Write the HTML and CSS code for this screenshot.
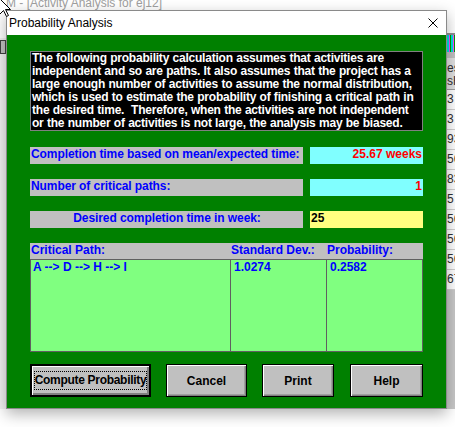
FILE: index.html
```html
<!DOCTYPE html>
<html>
<head>
<meta charset="utf-8">
<title>Probability Analysis</title>
<link rel="stylesheet" href="styles.css">
</head>
<body>
<div class="screen">
  <div class="apptitle">M - [Activity Analysis for ej12]</div>
  <div class="desk">
    <div class="leftstrip">
      <div class="lgap"></div>
      <div class="licon"></div>
    </div>
    <div class="dialog">
      <div class="titlebar">
        <span class="ttext">Probability Analysis</span>
        <svg class="close" width="10" height="10" viewBox="0 0 10 10"><path d="M0.5 0.5 L9.5 9.5 M9.5 0.5 L0.5 9.5" stroke="#000" stroke-width="1" fill="none"/></svg>
      </div>
      <div class="body">
        <div class="info">The following probability calculation assumes that activities are<br>independent and so are paths. It also assumes that the project has a<br>large enough number of activities to assume the normal distribution,<br>which is used to estimate the probability of finishing a critical path in<br>the desired time.&nbsp; Therefore, when the activities are not independent<br>or the number of activities is not large, the analysis may be biased.</div>
        <div class="row first">
          <div class="label">Completion time based on mean/expected time:</div>
          <div class="value cyan red">25.67 weeks</div>
        </div>
        <div class="row">
          <div class="label">Number of critical paths:</div>
          <div class="value cyan red">1</div>
        </div>
        <div class="row">
          <div class="label center">Desired completion time in week:</div>
          <div class="value yellow">25</div>
        </div>
        <div class="grid">
          <div class="ghead">
            <span class="h1">Critical Path:</span>
            <span class="h2">Standard Dev.:</span>
            <span class="h3">Probability:</span>
          </div>
          <div class="gbody">
            <div class="cell c1">A --&gt; D --&gt; H --&gt; I</div>
            <div class="cell c2">1.0274</div>
            <div class="cell c3">0.2582</div>
          </div>
        </div>
        <div class="buttons">
          <div class="btn default b1"><span class="focus">Compute Probability</span></div>
          <div class="btn b2">Cancel</div>
          <div class="btn b3">Print</div>
          <div class="btn b4">Help</div>
        </div>
      </div>
    </div>
    <div class="rightstrip">
      <div class="rs-white"></div>
      <div class="rs-line"></div>
      <div class="rs-tools"></div>
      <div class="rs-gray"></div>
      <div class="rs-head"><div>es</div><div>sH</div></div>
      <div class="rs-cells">
        <div class="rc">3</div>
        <div class="rc">3</div>
        <div class="rc">93</div>
        <div class="rc">56</div>
        <div class="rc">83</div>
        <div class="rc">5</div>
        <div class="rc">56</div>
        <div class="rc">56</div>
        <div class="rc">56</div>
        <div class="rc">67</div>
      </div>
      <div class="rs-bottom"></div>
    </div>
  </div>
  <svg class="cursor" width="13" height="20" viewBox="0 0 13 20"><path d="M0.5 0.5 L0.5 16.5 L4.5 12.5 L7.5 18.5 L9.5 17.5 L6.5 11.5 L11.5 11.5 Z" fill="#fff" stroke="#000" stroke-width="1"/></svg>
</div>
</body>
</html>
```

FILE: styles.css
```css
* { box-sizing: border-box; }
body {
  margin: 0;
  background: #fff;
  font-family: "Liberation Sans", Arial, sans-serif;
}
.screen {
  position: relative;
  width: 455px;
  height: 427px;
  overflow: hidden;
  background: #fff;
}
.apptitle {
  height: 10px;
  overflow: hidden;
  font-size: 12px;
  line-height: 6px;
  color: #a0a0a0;
  padding-left: 6px;
  white-space: nowrap;
}
.desk {
  display: flex;
  height: 399px;
}
.leftstrip {
  width: 6px;
  background: #f0f0f0;
  display: flex;
  flex-direction: column;
}
.lgap { height: 28px; background: #fff; }
.licon {
  height: 14px;
  margin-top: 2px;
  border: 1px solid #404040;
  background: #c0c0c0;
}
.dialog {
  width: 441px;
  border: 1px solid #8a8a8a;
  display: flex;
  flex-direction: column;
  box-shadow: 0 5px 14px rgba(0,0,0,0.3);
  position: relative;
  z-index: 1;
}
.titlebar {
  height: 24px;
  background: #fff;
  display: flex;
  align-items: center;
  justify-content: space-between;
  padding: 0 8px 0 2px;
}
.ttext {
  font-size: 12px;
  color: #000;
}
.body {
  flex: 1;
  background: #008000;
  padding: 16px 23px 0;
  display: flex;
  flex-direction: column;
}
.info {
  height: 80px;
  border: 1px solid #808080;
  background: #000;
  color: #fff;
  font-weight: bold;
  font-size: 12px;
  line-height: 13px;
  letter-spacing: -0.22px;
  word-spacing: 0.3px;
  padding: 0 0 0 1px;
  white-space: nowrap;
  overflow: hidden;
}
.row {
  display: flex;
  gap: 7px;
  height: 17px;
  margin-top: 15px;
  font-weight: bold;
  font-size: 12px;
  line-height: 15px;
}
.row.first { margin-top: 16px; }
.label {
  width: 273px;
  background: #c0c0c0;
  color: #0000ff;
  padding-left: 1px;
  white-space: nowrap;
  letter-spacing: -0.08px;
}
.label.center { text-align: center; }
.value {
  flex: 1;
  padding: 0 1px;
  color: #000;
}
.cyan { background: #80ffff; }
.yellow { background: #ffff80; }
.red { color: #ff0000; text-align: right; }
.grid {
  margin-top: 15px;
  display: flex;
  flex-direction: column;
  font-weight: bold;
  font-size: 12px;
  line-height: 14px;
  color: #0000ff;
}
.ghead {
  height: 16px;
  background: #c0c0c0;
  display: grid;
  grid-template-columns: 200px 96px 1fr;
}
.ghead span { padding-left: 1px; white-space: nowrap; }
.gbody {
  height: 93px;
  border: 1px solid #606060;
  background: #80ff80;
  display: grid;
  grid-template-columns: 199px 96px 1fr;
}
.cell { white-space: nowrap; }
.c1 { padding-left: 2px; }
.c2, .c3 { border-left: 1px solid #606060; padding-left: 3px; }
.buttons {
  margin-top: 12px;
  display: flex;
  height: 33px;
}
.btn {
  height: 33px;
  background: #c0c0c0;
  border: 1px solid #000;
  box-shadow: inset 1px 1px 0 #fff, inset -1px -1px 0 #808080, inset -2px -2px 0 #a0a0a0;
  display: flex;
  align-items: center;
  justify-content: center;
  font-weight: bold;
  font-size: 12px;
  color: #000;
  white-space: nowrap;
}
.btn.default {
  border-width: 2px;
  box-shadow: inset 1px 1px 0 #fff, inset -1px -1px 0 #808080, inset -2px -2px 0 #808080;
}
.focus {
  border: 1px dotted #000;
  padding: 2px 0;
  line-height: 13px;
  letter-spacing: -0.3px;
}
.b1 { width: 121px; }
.b2 { width: 81px; margin-left: 15px; }
.b3 { width: 72px; margin-left: 15px; }
.b4 { width: 73px; margin-left: 16px; }
.rightstrip {
  width: 8px;
  background: #c8c8c8;
  display: flex;
  flex-direction: column;
  overflow: hidden;
  font-size: 12px;
  color: #303030;
}
.rs-white { height: 23px; background: #fff; }
.rs-line { height: 2px; background: #909090; }
.rs-tools {
  height: 17px;
  background:
    repeating-linear-gradient(90deg, #00e0e0 0 2px, #ff40ff 2px 3px, #00a000 3px 4px),
    #00e0e0;
}
.rs-gray { height: 6px; background: #c0c0c0; }
.rs-head {
  height: 32px;
  background: #e0e0e0;
  line-height: 13px;
  padding-top: 4px;
  border-bottom: 1px solid #a0a0a0;
  white-space: nowrap;
}
.rs-cells {
  background: #fff;
  display: flex;
  flex-direction: column;
}
.rc {
  height: 20px;
  line-height: 18px;
  border-bottom: 1px solid #d0d0d0;
  white-space: nowrap;
}
.rs-bottom { flex: 1; background: #c8c8c8; }
.cursor {
  position: absolute;
  left: -1px;
  top: -2px;
  z-index: 5;
}
```
